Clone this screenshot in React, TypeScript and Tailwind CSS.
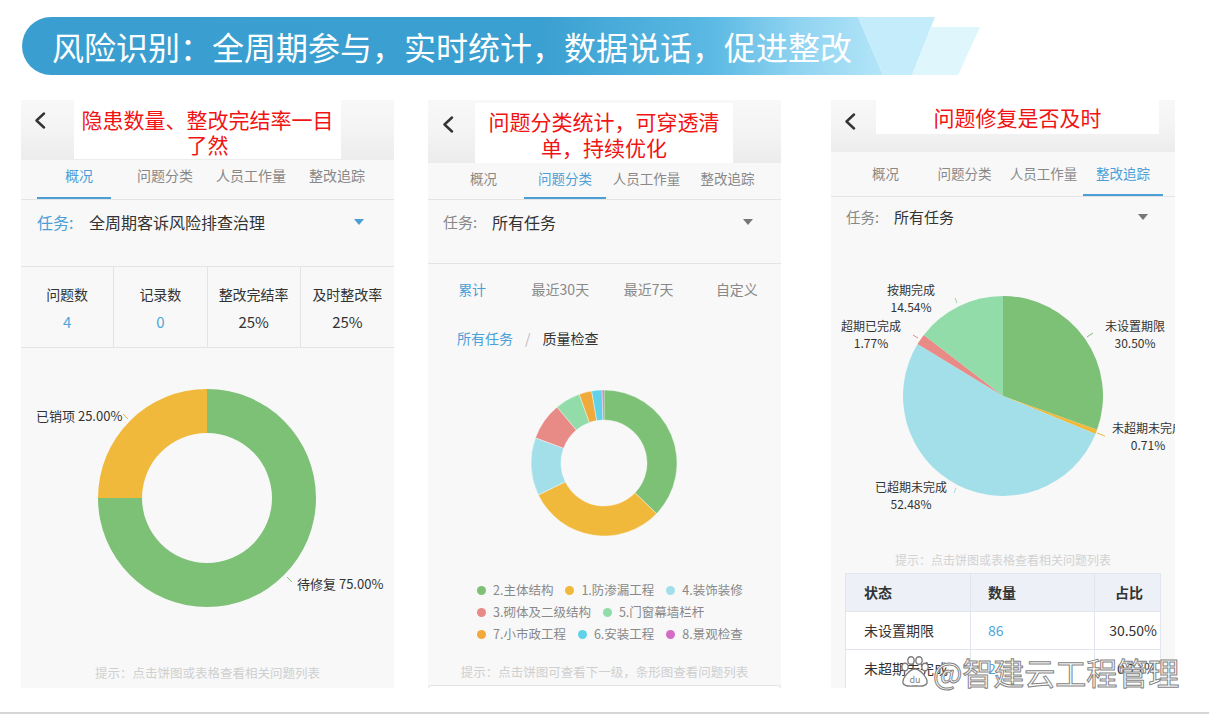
import React from 'react';

const BLUE = '#4b9fd6';

function pt(cx: number, cy: number, r: number, a: number): [number, number] {
  const rad = (a * Math.PI) / 180;
  return [cx + r * Math.sin(rad), cy - r * Math.cos(rad)];
}

function arc(cx: number, cy: number, r0: number, r1: number, a0: number, a1: number) {
  const large = a1 - a0 > 180 ? 1 : 0;
  const [x1, y1] = pt(cx, cy, r1, a0);
  const [x2, y2] = pt(cx, cy, r1, a1);
  if (r0 === 0) return `M${cx},${cy} L${x1},${y1} A${r1},${r1} 0 ${large} 1 ${x2},${y2} Z`;
  const [x3, y3] = pt(cx, cy, r0, a1);
  const [x4, y4] = pt(cx, cy, r0, a0);
  return `M${x1},${y1} A${r1},${r1} 0 ${large} 1 ${x2},${y2} L${x3},${y3} A${r0},${r0} 0 ${large} 0 ${x4},${y4} Z`;
}

function segs(parts: { p: number; c: string }[]) {
  let acc = 0;
  return parts.map((s) => {
    const a0 = (acc / 100) * 360;
    acc += s.p;
    const a1 = (acc / 100) * 360;
    return { a0, a1, c: s.c };
  });
}

function BackArrow() {
  return (
    <svg width="12" height="17" viewBox="0 0 12 17">
      <polyline points="10,1.5 2.5,8.5 10,15.5" fill="none" stroke="#333" strokeWidth="2.4" strokeLinecap="round" strokeLinejoin="round" />
    </svg>
  );
}

function Caret({ color }: { color: string }) {
  return (
    <svg width="10" height="6" viewBox="0 0 10 6">
      <polygon points="0,0 10,0 5,6" fill={color} />
    </svg>
  );
}

function Banner() {
  return (
    <div className="relative ml-[22px] mt-[17px] h-[58px] w-[958px] shrink-0">
      <svg className="absolute inset-0" width="958" height="58" viewBox="0 0 958 58">
        <defs>
          <linearGradient id="bn" x1="0" x2="1" y1="0" y2="0">
            <stop offset="0" stopColor="#3a9fd0" />
            <stop offset="0.6" stopColor="#3aa0d1" />
            <stop offset="0.8" stopColor="#5bb9e3" />
            <stop offset="0.9" stopColor="#8fd3f1" />
            <stop offset="1" stopColor="#b3e5f8" />
          </linearGradient>
        </defs>
        <path d="M29,0 H836 L861,58 H29 A29,29 0 0 1 29,0 Z" fill="url(#bn)" />
        <polygon points="836,0 913,0 890,58 861,58" fill="#c4ecfa" />
        <polygon points="909,10 958,10 936,58 890,58" fill="#def6fc" />
      </svg>
      <div className="relative pl-[30px] text-[32px] leading-[58px] text-white whitespace-nowrap">
        风险识别：全周期参与，实时统计，数据说话，促进整改
      </div>
    </div>
  );
}

function Panel1() {
  const s = segs([
    { p: 75, c: '#7cc176' },
    { p: 25, c: '#f0b93c' },
  ]);
  return (
    <div className="flex h-[588px] w-[373px] shrink-0 flex-col overflow-hidden bg-[#f8f8f8]">
      <div className="flex h-[60px] shrink-0 bg-linear-to-b from-[#f8f8f8] via-[#f4f4f4] to-[#ececec]">
        <div className="flex h-[40px] w-[53px] items-center pl-[13px]">
          <BackArrow />
        </div>
        <div className="flex h-[59px] w-[267px] flex-col items-center justify-center bg-white pt-[4px] text-[21px] leading-[25px] text-[#f01414]">
          <span className="whitespace-nowrap">隐患数量、整改完结率一目</span>
          <span>了然</span>
        </div>
      </div>
      <div className="flex h-[40px] shrink-0 border-b border-[#e4e4e4] pl-[15px] text-[14px] leading-[20px] text-[#888]">
        <div className="flex w-[86px] flex-col">
          <div className="pt-[5px] text-center text-[#4b9fd6]">概况</div>
          <div className="mt-auto ml-[1px] h-[2px] w-[74px] bg-[#4b9fd6]" />
        </div>
        <div className="w-[86px] pt-[5px] text-center whitespace-nowrap">问题分类</div>
        <div className="w-[86px] pt-[5px] text-center whitespace-nowrap">人员工作量</div>
        <div className="w-[86px] pt-[5px] text-center whitespace-nowrap">整改追踪</div>
      </div>
      <div className="flex h-[67px] shrink-0 items-start border-b border-[#e4e4e4] pt-[10px] pr-[30px] pl-[16px] text-[16px] leading-[24px]">
        <span className="w-[52px] text-[#4b9fd6]">任务:</span>
        <span className="flex-1 text-[#333]">全周期客诉风险排查治理</span>
        <div className="flex h-[24px] items-center">
          <Caret color={BLUE} />
        </div>
      </div>
      <div className="grid h-[81px] shrink-0 grid-cols-4 border-b border-[#e4e4e4]">
        {[
          ['问题数', '4', true],
          ['记录数', '0', true],
          ['整改完结率', '25%', false],
          ['及时整改率', '25%', false],
        ].map(([l, v, b], i) => (
          <div key={i} className={`flex flex-col items-center pt-[17px] ${i < 3 ? 'border-r border-[#e4e4e4]' : ''}`}>
            <div className="text-[14px] leading-[20px] text-[#333]">{l}</div>
            <div className={`mt-[8px] text-[15px] leading-[20px] ${b ? 'text-[#4fa6da]' : 'text-[#333]'}`}>{v}</div>
          </div>
        ))}
      </div>
      <div className="flex-1">
        <svg width="373" height="312" viewBox="0 0 373 312">
          {s.map((g, i) => (
            <path key={i} d={arc(186, 150, 65, 109, g.a0, g.a1)} fill={g.c} />
          ))}
          <line x1="102" y1="66" x2="107" y2="71" stroke="#f0b93c" strokeWidth="1" />
          <line x1="266" y1="229" x2="271" y2="234" stroke="#7cc176" strokeWidth="1" />
          <text x="15" y="67" fontSize="13" fill="#333" dominantBaseline="central">已销项 25.00%</text>
          <text x="276" y="235" fontSize="13" fill="#333" dominantBaseline="central">待修复 75.00%</text>
        </svg>
      </div>
      <div className="h-[27px] shrink-0 text-center text-[12.5px] leading-[24px] text-[#cfcfcf]">
        提示：点击饼图或表格查看相关问题列表
      </div>
    </div>
  );
}

function Panel2() {
  const s = segs([
    { p: 37.2, c: '#7cc176' },
    { p: 30.6, c: '#f0b93c' },
    { p: 12.8, c: '#a2dfe9' },
    { p: 8.3, c: '#e88a85' },
    { p: 5.6, c: '#92dcaa' },
    { p: 2.8, c: '#f2a93b' },
    { p: 2.3, c: '#5fd2e8' },
    { p: 0.4, c: '#d46cc6' },
  ]);
  const legend: [string, string][][] = [
    [
      ['#7cc176', '2.主体结构'],
      ['#f0b93c', '1.防渗漏工程'],
      ['#a2dfe9', '4.装饰装修'],
    ],
    [
      ['#e88a85', '3.砌体及二级结构'],
      ['#92dcaa', '5.门窗幕墙栏杆'],
    ],
    [
      ['#f2a93b', '7.小市政工程'],
      ['#5fd2e8', '6.安装工程'],
      ['#d46cc6', '8.景观检查'],
    ],
  ];
  return (
    <div className="flex h-[588px] w-[353px] shrink-0 flex-col overflow-hidden bg-[#f8f8f8]">
      <div className="flex h-[63px] shrink-0 bg-linear-to-b from-[#f8f8f8] via-[#f4f4f4] to-[#ececec]">
        <div className="flex h-[48px] w-[47px] items-center pl-[14px]">
          <BackArrow />
        </div>
        <div className="mt-[3px] flex h-[60px] w-[258px] flex-col items-center justify-center bg-white pt-[2px] text-[21px] leading-[26px] text-[#f01414]">
          <span className="whitespace-nowrap">问题分类统计，可穿透清</span>
          <span className="whitespace-nowrap">单，持续优化</span>
        </div>
      </div>
      <div className="flex h-[37px] shrink-0 border-b border-[#e4e4e4] pl-[15px] text-[13.5px] leading-[20px] text-[#888]">
        <div className="w-[81px] pt-[5px] text-center">概况</div>
        <div className="flex w-[82px] flex-col">
          <div className="pt-[5px] text-center whitespace-nowrap text-[#4b9fd6]">问题分类</div>
          <div className="mt-auto h-[2px] w-full bg-[#4b9fd6]" />
        </div>
        <div className="w-[81px] pt-[5px] text-center whitespace-nowrap">人员工作量</div>
        <div className="w-[81px] pt-[5px] text-center whitespace-nowrap">整改追踪</div>
      </div>
      <div className="flex h-[64px] shrink-0 items-start border-b border-[#e4e4e4] pt-[10px] pr-[28px] pl-[15px] leading-[24px]">
        <span className="w-[49px] text-[15px] text-[#888]">任务:</span>
        <span className="flex-1 text-[16px] text-[#333]">所有任务</span>
        <div className="flex h-[24px] items-center">
          <Caret color="#777" />
        </div>
      </div>
      <div className="grid h-[49px] shrink-0 grid-cols-4 pt-[15px] text-center text-[14px] leading-[20px] text-[#888]">
        <div className="text-[#4b9fd6]">累计</div>
        <div>最近30天</div>
        <div>最近7天</div>
        <div>自定义</div>
      </div>
      <div className="flex h-[50px] shrink-0 pt-[15px] pl-[29px] text-[14px] leading-[20px]">
        <span className="text-[#4b9fd6]">所有任务</span>
        <span className="mx-[12px] text-[#bbb]">/</span>
        <span className="text-[#333]">质量检查</span>
      </div>
      <div className="h-[210px] shrink-0">
        <svg width="353" height="210" viewBox="0 0 353 210">
          {s.map((g, i) => (
            <path key={i} d={arc(176, 100, 43, 73, g.a0, g.a1)} fill={g.c} stroke="#ffffff" strokeWidth="0.4" />
          ))}
        </svg>
      </div>
      <div className="flex h-[72px] shrink-0 flex-col pt-[6px] pl-[49px] text-[12.5px] leading-[22px] text-[#888]">
        {legend.map((row, ri) => (
          <div key={ri} className="flex h-[22px] items-center gap-[12px]">
            {row.map(([c, t]) => (
              <div key={t} className="flex items-center gap-[7px] whitespace-nowrap">
                <span className="h-[9px] w-[9px] rounded-full" style={{ backgroundColor: c }} />
                <span>{t}</span>
              </div>
            ))}
          </div>
        ))}
      </div>
      <div className="h-[40px] shrink-0 pt-[17px] text-center text-[12.5px] leading-[20px] text-[#cfcfcf]">
        提示：点击饼图可查看下一级，条形图查看问题列表
      </div>
      <div className="flex-1 rounded-t-[4px] border border-b-0 border-[#e4e4e4] bg-white" />
    </div>
  );
}

function Panel3() {
  const s = segs([
    { p: 30.5, c: '#7cc176' },
    { p: 0.71, c: '#f0b93c' },
    { p: 52.48, c: '#a3dfe9' },
    { p: 1.77, c: '#e88a85' },
    { p: 14.54, c: '#92dcaa' },
  ]);
  const labels: [number, number, string, string][] = [
    [80, 52, '按期完成', '14.54%'],
    [40, 88, '超期已完成', '1.77%'],
    [304, 88, '未设置期限', '30.50%'],
    [317, 190, '未超期未完成', '0.71%'],
    [80, 249, '已超期未完成', '52.48%'],
  ];
  return (
    <div className="flex h-[588px] w-[344px] shrink-0 flex-col overflow-hidden bg-[#f8f8f8]">
      <div className="flex h-[52px] shrink-0 bg-linear-to-b from-[#f8f8f8] via-[#f4f4f4] to-[#ececec]">
        <div className="flex h-[42px] w-[45px] items-center pl-[13px]">
          <BackArrow />
        </div>
        <div className="flex h-[34px] w-[283px] items-center justify-center bg-white text-[21px] leading-[34px] text-[#f01414]">
          问题修复是否及时
        </div>
      </div>
      <div className="flex h-[45px] shrink-0 border-b border-[#e4e4e4] pl-[15px] text-[13.5px] leading-[20px] text-[#888]">
        <div className="w-[79px] pt-[11px] text-center">概况</div>
        <div className="w-[79px] pt-[11px] text-center whitespace-nowrap">问题分类</div>
        <div className="w-[79px] pt-[11px] text-center whitespace-nowrap">人员工作量</div>
        <div className="flex w-[80px] flex-col">
          <div className="pt-[11px] text-center whitespace-nowrap text-[#4b9fd6]">整改追踪</div>
          <div className="mt-auto h-[2px] w-full bg-[#4b9fd6]" />
        </div>
      </div>
      <div className="flex h-[40px] shrink-0 items-start pt-[8px] pr-[27px] pl-[15px] leading-[24px]">
        <span className="w-[48px] text-[14.5px] text-[#888]">任务:</span>
        <span className="flex-1 text-[15px] text-[#333]">所有任务</span>
        <div className="flex h-[24px] items-center">
          <Caret color="#777" />
        </div>
      </div>
      <div className="h-[311px] shrink-0">
        <svg width="344" height="311" viewBox="0 0 344 311">
          {s.map((g, i) => (
            <path key={i} d={arc(172, 159, 0, 100, g.a0, g.a1)} fill={g.c} />
          ))}
          <line x1="256" y1="100" x2="262" y2="96" stroke="#7cc176" />
          <line x1="124" y1="61" x2="126" y2="66" stroke="#92dcaa" />
          <line x1="82" y1="98" x2="87" y2="101" stroke="#e88a85" />
          <line x1="266" y1="196" x2="274" y2="199" stroke="#f0b93c" />
          <line x1="125" y1="251" x2="123" y2="256" stroke="#a3dfe9" />
          {labels.map(([x, y, a, b]) => (
            <g key={a}>
              <text x={x} y={y} fontSize="12" fill="#333" textAnchor="middle" dominantBaseline="central">{a}</text>
              <text x={x} y={y + 17} fontSize="12" fill="#333" textAnchor="middle" dominantBaseline="central">{b}</text>
            </g>
          ))}
        </svg>
      </div>
      <div className="h-[25px] shrink-0 text-center text-[12px] leading-[24px] text-[#d2d2d2]">
        提示：点击饼图或表格查看相关问题列表
      </div>
      <div className="mx-[14px] shrink-0 border-x border-[#e1e6ee] text-[14px] text-[#333]">
        <div className="grid h-[39px] grid-cols-[125px_124px_1fr] border-y border-[#e1e6ee] bg-[#edf1f7] font-bold leading-[37px]">
          <div className="border-r border-[#e1e6ee] pl-[18px]">状态</div>
          <div className="border-r border-[#e1e6ee] pl-[17px]">数量</div>
          <div className="pl-[20px]">占比</div>
        </div>
        <div className="grid h-[38px] grid-cols-[125px_124px_1fr] border-b border-[#e1e6ee] bg-white leading-[37px]">
          <div className="border-r border-[#e1e6ee] pl-[18px]">未设置期限</div>
          <div className="border-r border-[#e1e6ee] pl-[17px] text-[#4fa6da]">86</div>
          <div className="pr-[3px] text-right">30.50%</div>
        </div>
        <div className="grid h-[38px] grid-cols-[125px_124px_1fr] bg-white leading-[37px]">
          <div className="border-r border-[#e1e6ee] pl-[18px] whitespace-nowrap">未超期未完成</div>
          <div className="border-r border-[#e1e6ee] pl-[17px] text-[#4fa6da]">2</div>
          <div className="pr-[3px] text-right">0.71%</div>
        </div>
      </div>
    </div>
  );
}

function Watermark() {
  return (
    <div className="pointer-events-none absolute top-[654px] left-[900px] flex items-center gap-[3px]">
      <svg width="30" height="34" viewBox="0 0 30 34">
        <g fill="#ffffff" stroke="#7d7d7d" strokeWidth="1.4">
          <ellipse cx="5" cy="12" rx="3.2" ry="3.8" />
          <ellipse cx="11" cy="5.5" rx="3.2" ry="3.8" />
          <ellipse cx="19" cy="5.5" rx="3.2" ry="3.8" />
          <ellipse cx="25" cy="12" rx="3.2" ry="3.8" />
          <path d="M15,14 C20,14 28,23 27,28 C26,32 20,31 15,31 C10,31 4,32 3,28 C2,23 10,14 15,14 Z" />
        </g>
        <text x="15" y="28" fontSize="9" fill="#7d7d7d" textAnchor="middle">du</text>
      </svg>
      <span className="text-[31px] leading-[36px] whitespace-nowrap text-white [-webkit-text-stroke:1px_#858585]">
        @智建云工程管理
      </span>
    </div>
  );
}

export default function App() {
  return (
    <div className="relative flex h-[714px] w-[1209px] flex-col overflow-hidden bg-white font-['Noto_Sans_CJK_SC','Noto_Sans',sans-serif]">
      <Banner />
      <div className="mt-[25px] flex shrink-0 pl-[21px]">
        <Panel1 />
        <div className="w-[34px] shrink-0" />
        <Panel2 />
        <div className="w-[50px] shrink-0" />
        <Panel3 />
      </div>
      <div className="flex-1" />
      <div className="h-[2px] shrink-0 bg-[#d6d6d6]" />
      <Watermark />
    </div>
  );
}
